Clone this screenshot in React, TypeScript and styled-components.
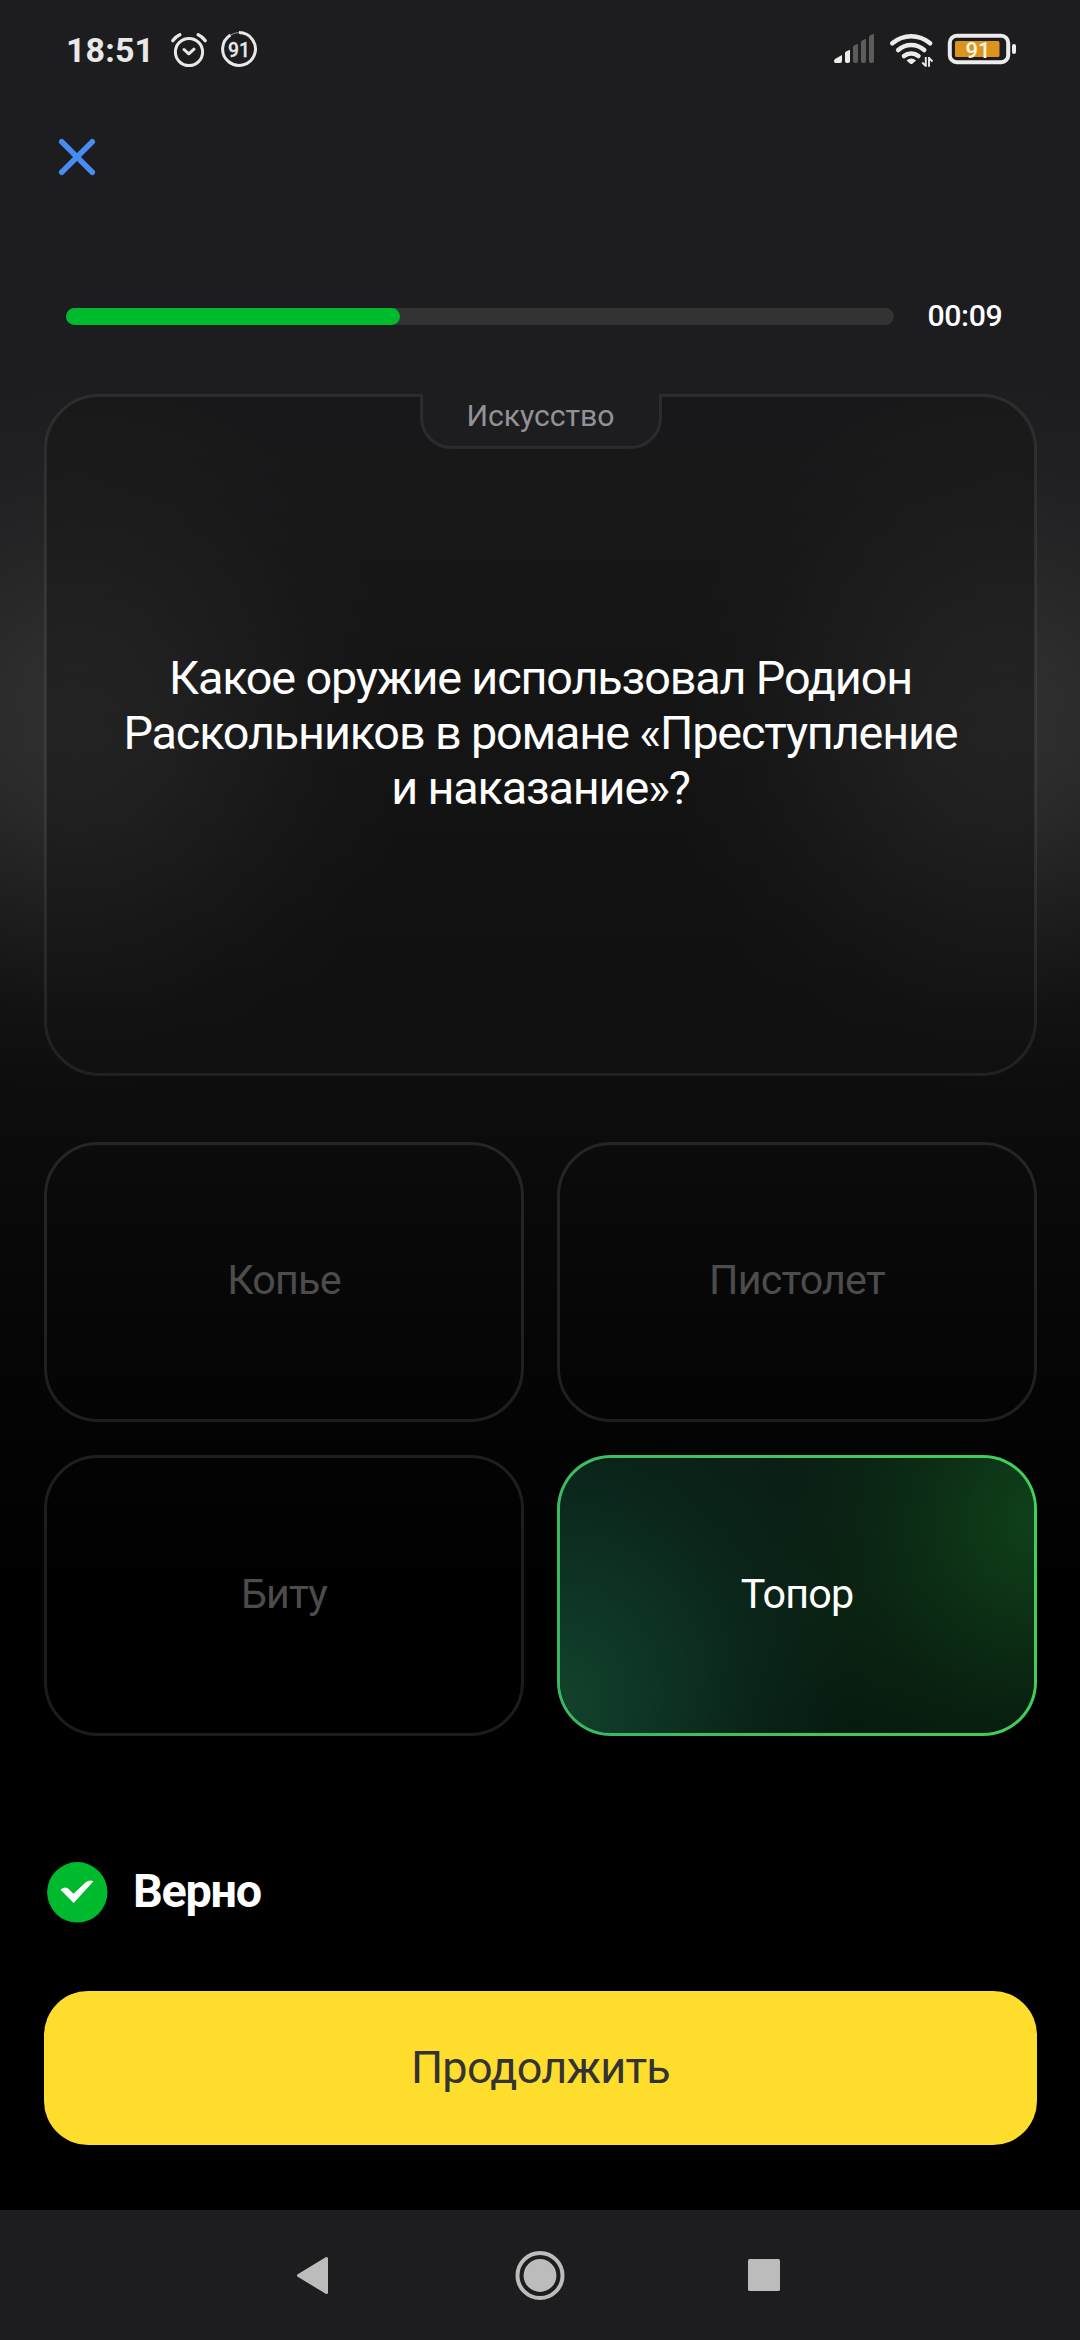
import React from 'react';
import styled, { createGlobalStyle } from 'styled-components';

const GlobalStyle = createGlobalStyle`
  * { box-sizing: border-box; }
  body { margin: 0; background: #000; }
  svg { display: block; flex: none; }
`;

const glow = 'rgba(255, 255, 255, 0.115), rgba(255, 255, 255, 0.094) 25%, rgba(255, 255, 255, 0.054) 50%, rgba(255, 255, 255, 0.016) 77%, transparent';

const Screen = styled.main`
  width: 1080px;
  height: 2340px;
  display: flex;
  flex-direction: column;
  overflow: hidden;
  font-family: Roboto, "Noto Sans", sans-serif;
  color: #fff;
  background:
    radial-gradient(ellipse 340px 360px at 75px 738px, ${glow}),
    radial-gradient(ellipse 340px 360px at 1005px 738px, ${glow}),
    linear-gradient(#1d1d1f 0, #1d1d1f 440px, #161617 700px, #111 900px, #0c0c0c 1130px, #060606 1320px, #000 1600px);
`;

const StatusBar = styled.header`
  height: 100px;
  padding: 0 62px 0 66px;
  display: flex;
  justify-content: space-between;
`;

const StatusGroup = styled.div`
  display: flex;
  align-items: flex-start;
`;

const Clock = styled.time`
  width: 104px;
  padding-top: 30px;
  font-size: 34px;
  line-height: 40px;
  font-weight: 700;
  letter-spacing: 0.1px;
  color: #e8e8e8;
`;

const TopBar = styled.div`
  height: 208px;
  padding: 36px 56px 0;
`;

const CloseButton = styled.button`
  display: block;
  padding: 0;
  border: 0;
  background: none;
`;

const TimerRow = styled.section`
  height: 86px;
  padding: 0 66px;
  display: flex;
  align-items: flex-start;
`;

const Track = styled.div`
  width: 828px;
  height: 17px;
  border-radius: 8.5px;
  background: #333;
`;

const Fill = styled.div`
  height: 100%;
  border-radius: 8.5px;
  background: #00ba2e;
`;

const TimeLeft = styled.span`
  margin: -10px 0 0 33.5px;
  font-size: 30.25px;
  line-height: 36px;
  font-weight: 500;
  letter-spacing: -0.4px;
`;

const QuestionCard = styled.section`
  height: 682px;
  margin: 0 43px 0 44px;
  display: grid;
  grid-template-rows: 55px 1fr;
  justify-items: center;
  position: relative;
`;

const CardOutline = styled.svg`
  position: absolute;
  inset: 0;
`;

const Category = styled.div`
  position: relative;
  padding-top: 4px;
  font-size: 30.25px;
  line-height: 36px;
  letter-spacing: -0.1px;
  color: #919298;
`;

const Question = styled.h1`
  position: relative;
  width: 860px;
  margin: 202px 0 0;
  text-align: center;
  font-size: 46.75px;
  line-height: 55px;
  font-weight: 400;
  letter-spacing: -1.15px;
  white-space: pre-line;
`;

const Answers = styled.section`
  margin: 66px 43px 0 44px;
  display: grid;
  grid-template-columns: 1fr 1fr;
  grid-template-rows: 280px 281px;
  gap: 33px;
`;

const Answer = styled.button<{ $correct?: boolean }>`
  padding: 0 0 4px;
  border: 3px solid ${(p) => (p.$correct ? 'transparent' : 'rgba(255, 255, 255, 0.11)')};
  border-radius: 54px;
  font: 400 41.25px/50px Roboto, "Noto Sans", sans-serif;
  letter-spacing: -0.8px;
  color: ${(p) => (p.$correct ? '#fff' : '#4c4c4c')};
  background: ${(p) =>
    p.$correct
      ? `radial-gradient(ellipse 290px 350px at 0 90%, rgba(20, 70, 46, 0.9), rgba(15, 62, 46, 0.65) 35%, rgba(13, 52, 40, 0.3) 68%, transparent) padding-box,
         radial-gradient(ellipse 260px 300px at 100% 22%, rgba(16, 70, 28, 0.85), rgba(14, 60, 22, 0.55) 38%, rgba(14, 46, 18, 0.25) 70%, transparent) padding-box,
         linear-gradient(165deg, #0a1e15 10%, #0a2013 55%, #06180d) padding-box,
         linear-gradient(75deg, #38b765, #45c45f 50%, #3fd057) border-box`
      : 'transparent'};
`;

const Verdict = styled.section`
  height: 255px;
  padding: 126px 47px 0;
  display: flex;
  align-items: flex-start;
  gap: 25px;
`;

const VerdictText = styled.strong`
  margin-top: -1px;
  font-size: 46.75px;
  line-height: 60px;
  font-weight: 700;
  letter-spacing: -1.3px;
`;

const ContinueButton = styled.button`
  height: 154px;
  margin: 0 43px 0 44px;
  padding: 0;
  border: 0;
  border-radius: 44px;
  background: #ffdd2d;
  color: #333;
  font: 400 45px/54px Roboto, "Noto Sans", sans-serif;
  letter-spacing: -0.75px;
`;

const NavBar = styled.nav`
  height: 130px;
  margin-top: auto;
  padding: 0 298px 0 295px;
  display: flex;
  align-items: center;
  justify-content: space-between;
  background: #1d1d1f;
`;

const SmallNumber = styled.text`
  font-family: Roboto, sans-serif;
  font-weight: 500;
`;

const LeftStatusIcons = () => (
  <svg width="90" height="80" viewBox="170 0 90 80" fill="none" stroke="#e8e8e8" strokeWidth="3">
    <circle cx="189" cy="52" r="13.6" />
    <path d="M184 49.5l4.8 4.3 5.2-4.6" strokeLinecap="round" strokeLinejoin="round" />
    <path d="M172.8 40.6q2.6-3.9 7-5.9M205.2 40.6q-2.6-3.9-7-5.9" strokeWidth="3.4" strokeLinecap="round" />
    <path d="M239 32.6a16.4 16.4 0 1 1-8.5 2.4" />
    <path d="M230.5 35q4-2.3 8.5-2.4" strokeWidth="1" opacity=".6" />
    <SmallNumber x="239" y="56.5" fontSize="21" textAnchor="middle" textLength="22" lengthAdjust="spacingAndGlyphs" fill="#e8e8e8" stroke="#e8e8e8" strokeWidth=".3">91</SmallNumber>
  </svg>
);

const RightStatusIcons = () => (
  <svg width="186" height="80" viewBox="832 0 186 80" fill="none">
    <g fill="#ececec">
      <path d="M834 61q0-1.5 1.4-2.2L842 55v6q0 2-2 2h-4.5q-1.5 0-1.5-2Z" />
      <path d="M845 53q0-1 1-1.5l4-1.7V61q0 2-2 2h-1q-2 0-2-2Z" />
    </g>
    <g fill="#5c5c5d">
      <path d="M853 47q0-1 1-1.5l4-1.7V61q0 2-2 2h-1q-2 0-2-2Z" />
      <path d="M861 42q0-1 1-1.5l4-1.7V61q0 2-2 2h-1q-2 0-2-2Z" />
      <path d="M869 37q0-1 1-1.5l4-1.7V61q0 2-2 2h-1q-2 0-2-2Z" />
    </g>
    <g stroke="#ececec" strokeWidth="4.6" strokeLinecap="round">
      <path d="M892.3 43.3q8.5-7 18.9-7t18.9 7" />
      <path d="M898.2 50q5.7-5 13-5t13 5" />
      <path d="M904 56q3-2.5 7.2-2.5t7.2 2.5" />
    </g>
    <path d="M906.5 60.5q4.8-3.8 9.6 0l-3.5 3q-1.3 1-2.6 0Z" fill="#ececec" />
    <path d="M925.8 57v9.8M929 57v9.8M922.3 62.5l3.5 3.5M929 58l3.5 3.5" stroke="#ececec" strokeWidth="1.9" />
    <rect x="949.8" y="35.8" width="58.4" height="26.4" rx="7" stroke="#ececec" strokeWidth="4" />
    <rect x="1012" y="44" width="4" height="10" rx="2" fill="#ececec" />
    <rect x="955" y="41" width="44.5" height="16" rx="1.5" fill="#dc941f" />
    <SmallNumber x="978" y="57.5" fontSize="22" textAnchor="middle" fill="#fff7e0">91</SmallNumber>
  </svg>
);

const CloseIcon = () => (
  <svg width="42" height="42" viewBox="0 0 42 42" fill="none" stroke="#478cf3" strokeWidth="5.5" strokeLinecap="round">
    <path d="M5.7 5.7l30.6 30.6M36.3 5.7l-30.6 30.6" />
  </svg>
);

const CheckIcon = () => (
  <svg width="61" height="61" viewBox="0 0 61 61">
    <circle cx="30.3" cy="30.3" r="30.2" fill="#00ba2e" />
    <path d="M13.5 27.7q5-4.3 8.7-.3l4.3 4.4L38.7 20.2q3.800-3 7.800-.9L26.700 41Z" fill="#fff" />
  </svg>
);

const BackIcon = () => (
  <svg width="37" height="50" viewBox="0 0 37 50" fill="#bcbcbc" stroke="#bcbcbc" strokeWidth="3" strokeLinejoin="round">
    <path d="M3.5 25.5L31.5 8.500v34Z" />
  </svg>
);

const HomeIcon = () => (
  <svg width="50" height="50" viewBox="0 0 50 50">
    <circle cx="25" cy="25.5" r="22.5" fill="none" stroke="#bcbcbc" strokeWidth="4" />
    <circle cx="25" cy="25.5" r="16.4" fill="#bcbcbc" />
  </svg>
);

const RecentsIcon = () => (
  <svg width="34" height="50" viewBox="0 0 34 50">
    <rect x="0" y="9" width="32" height="32" rx="1.5" fill="#bcbcbc" />
  </svg>
);

const OUTLINE =
  'M377.5 1.5H55.5A54 54 0 0 0 1.5 55.5V626.5A54 54 0 0 0 55.5 680.5H937.5A54 54 0 0 0 991.5 626.5V55.5A54 54 0 0 0 937.5 1.5H616.5V24A29.5 29.5 0 0 1 587 53.5H407A29.5 29.5 0 0 1 377.5 24Z';

const answers = [
  { label: 'Копье' },
  { label: 'Пистолет' },
  { label: 'Биту' },
  { label: 'Топор', correct: true },
];

export default function App() {
  const progress = 334 / 828;
  return (
    <>
      <GlobalStyle />
      <Screen>
        <StatusBar>
          <StatusGroup>
            <Clock>18:51</Clock>
            <LeftStatusIcons />
          </StatusGroup>
          <StatusGroup>
            <RightStatusIcons />
          </StatusGroup>
        </StatusBar>
        <TopBar>
          <CloseButton aria-label="Закрыть">
            <CloseIcon />
          </CloseButton>
        </TopBar>
        <TimerRow>
          <Track>
            <Fill style={{ width: `${progress * 100}%` }} />
          </Track>
          <TimeLeft>00:09</TimeLeft>
        </TimerRow>
        <QuestionCard>
          <CardOutline width="993" height="682" viewBox="0 0 993 682">
            <path d={OUTLINE} fill="#151515" fillOpacity=".45" stroke="#fff" strokeOpacity=".08" strokeWidth="3" />
          </CardOutline>
          <Category>Искусство</Category>
          <Question>{'Какое оружие использовал Родион\nРаскольников в романе «Преступление\nи наказание»?'}</Question>
        </QuestionCard>
        <Answers>
          {answers.map((a) => (
            <Answer key={a.label} $correct={a.correct}>
              {a.label}
            </Answer>
          ))}
        </Answers>
        <Verdict>
          <CheckIcon />
          <VerdictText>Верно</VerdictText>
        </Verdict>
        <ContinueButton>Продолжить</ContinueButton>
        <NavBar>
          <BackIcon />
          <HomeIcon />
          <RecentsIcon />
        </NavBar>
      </Screen>
    </>
  );
}
